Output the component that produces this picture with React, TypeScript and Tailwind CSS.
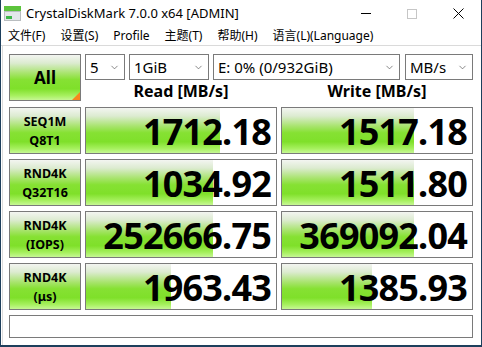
import { ChevronDown } from "lucide-react";

const green =
  "bg-[linear-gradient(to_bottom,#f3f5f1_0%,#dcebd0_18%,#a9e46f_40%,#86e133_55%,#7fe02a_75%,#a6f05e_90%,#c6f794_100%)]";

const rows = [
  { l1: "SEQ1M", l2: "Q8T1", read: "1712.18", rw: 134, write: "1517.18", ww: 132 },
  { l1: "RND4K", l2: "Q32T16", read: "1034.92", rw: 127, write: "1511.80", ww: 132 },
  { l1: "RND4K", l2: "(IOPS)", read: "252666.75", rw: 127, write: "369092.04", ww: 132 },
  { l1: "RND4K", l2: "(μs)", read: "1963.43", rw: 85, write: "1385.93", ww: 90 },
];

const Select = ({ label, w }: { label: string; w: string }) => (
  <div
    className={`${w} h-[26px] flex items-center justify-between border border-[#7a7a7a] bg-white pl-[4px] pr-[4px] text-[15px] text-black`}
  >
    <span>{label}</span>
    <ChevronDown size={11} strokeWidth={1.5} className="text-[#555]" />
  </div>
);

const Value = ({ text, bar }: { text: string; bar: number }) => (
  <div className="relative w-[192px] h-[47px] border border-[#7a7a7a] bg-white">
    <div className={`absolute left-0 top-0 bottom-0 ${green}`} style={{ width: bar }} />
    <div className="relative h-full flex items-center justify-end pr-[5px] pt-[2px] text-[36px] font-bold leading-none tracking-[-0.8px] text-black">
      {text}
    </div>
  </div>
);

const App = () => {
  return (
    <div
      className="w-[482px] h-[347px] bg-white border-l border-r border-b-2 border-[#1d3f5c] flex flex-col overflow-hidden"
      style={{ fontFamily: '"Noto Sans", "Noto Sans CJK SC", sans-serif' }}
    >
      {/* title bar */}
      <div className="h-[27px] flex items-center text-[13px] text-black">
        <svg width="17" height="15" viewBox="0 0 17 15" className="ml-[3px] mr-[5px]">
          <rect x="0" y="0" width="17" height="5" fill="#5cc43c" />
          <rect x="0" y="5" width="17" height="10" fill="#b9bdc0" />
          <rect x="1" y="6" width="15" height="8" fill="#e4e7e9" />
          <rect x="2" y="10" width="6" height="3" fill="#3fb84a" />
        </svg>
        <span>CrystalDiskMark 7.0.0 x64 [ADMIN]</span>
        <div className="ml-auto flex items-center">
          <div className="w-[46px] flex justify-center">
            <div className="w-[10px] h-px bg-black" />
          </div>
          <div className="w-[46px] flex justify-center">
            <div className="w-[10px] h-[10px] border border-[#c6c6c6]" />
          </div>
          <div className="w-[46px] flex justify-center">
            <svg width="11" height="11" viewBox="0 0 11 11">
              <path d="M0.5 0.5 L10.5 10.5 M10.5 0.5 L0.5 10.5" stroke="#000" strokeWidth="1" />
            </svg>
          </div>
        </div>
      </div>

      {/* menu */}
      <div className="h-[18px] flex items-center gap-[15px] pl-[7px] text-[12px] text-black">
        <span>文件(F)</span>
        <span>设置(S)</span>
        <span>Profile</span>
        <span>主题(T)</span>
        <span>帮助(H)</span>
        <span>语言(L)(Language)</span>
      </div>
      <div className="h-px bg-[#dadada]" />

      {/* client */}
      <div className="flex-1 ml-px border-l border-[#dcdcdc] pl-[6px] pt-[8px] flex flex-col gap-[5px]">
        <div className="flex gap-[4px]">
          <div
            className={`relative w-[72px] h-[47px] border border-[#7a7a7a] ${green} flex items-center justify-center text-[17px] font-bold text-black`}
          >
            All
            <div className="absolute right-0 bottom-0 w-0 h-0 border-l-[8px] border-l-transparent border-b-[8px] border-b-[#f7861e]" />
          </div>
          <div className="w-[388px] flex flex-col">
            <div className="flex">
              <Select label="5" w="w-[40px]" />
              <div className="w-[4px]" />
              <Select label="1GiB" w="w-[80px]" />
              <div className="w-[4px]" />
              <Select label="E: 0% (0/932GiB)" w="w-[187px]" />
              <div className="w-[5px]" />
              <Select label="MB/s" w="w-[68px]" />
            </div>
            <div className="flex-1 flex gap-[4px] text-[16px] font-bold text-black">
              <div className="w-[192px] flex items-end justify-center leading-[22px]">Read [MB/s]</div>
              <div className="w-[192px] flex items-end justify-center leading-[22px]">Write [MB/s]</div>
            </div>
          </div>
        </div>

        {rows.map((r, i) => (
          <div key={i} className="flex gap-[4px]">
            <div
              className={`w-[72px] h-[47px] border border-[#7a7a7a] ${green} flex flex-col items-center justify-center text-[12.5px] font-bold leading-[19px] text-black`}
            >
              <span>{r.l1}</span>
              <span>{r.l2}</span>
            </div>
            <Value text={r.read} bar={r.rw} />
            <Value text={r.write} bar={r.ww} />
          </div>
        ))}

        <div className="w-[464px] h-[23px] border border-[#7a7a7a] bg-white" />
      </div>
    </div>
  );
};

export default App;
